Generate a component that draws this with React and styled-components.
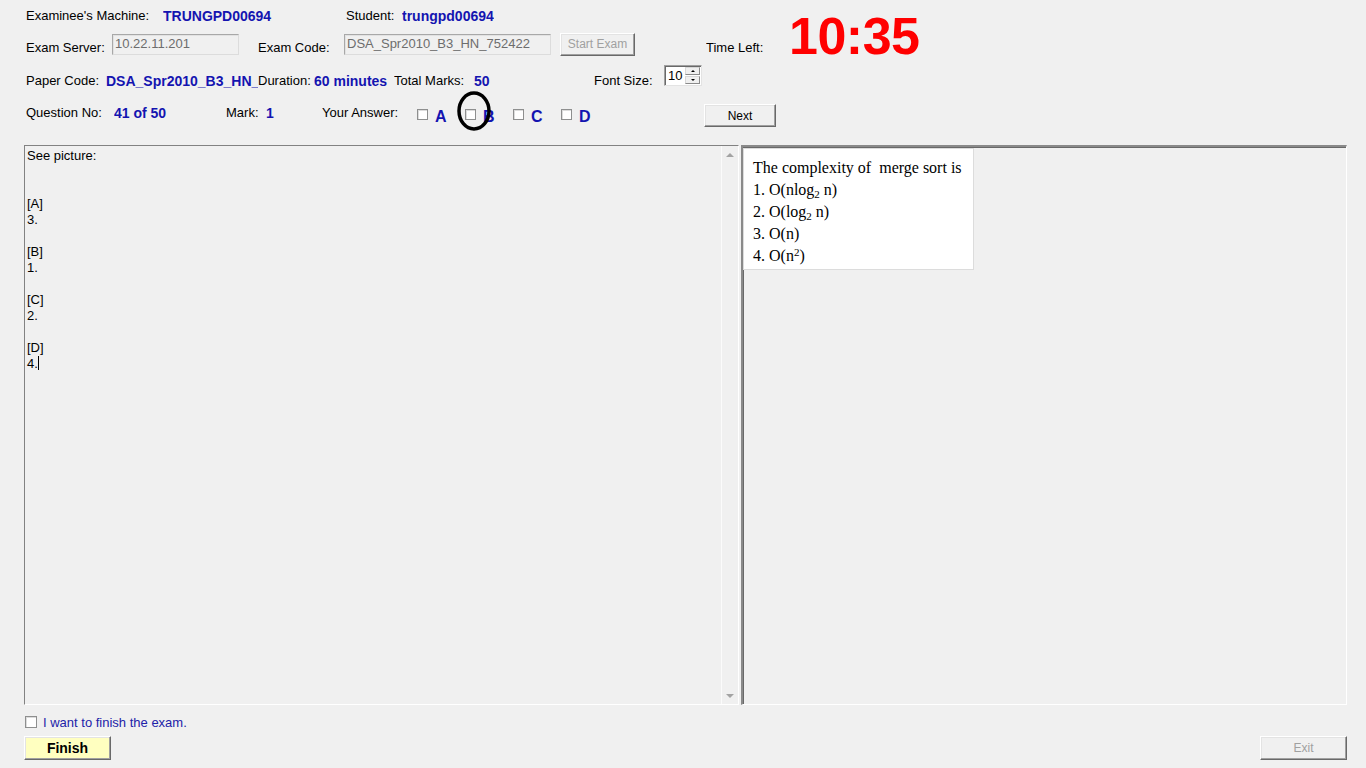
import React from "react";
import styled, { createGlobalStyle } from "styled-components";

const Global = createGlobalStyle`
  html, body { margin: 0; padding: 0; background: #f0f0f0; }
  body { font-family: "Liberation Sans", Arial, sans-serif; font-size: 13px; color: #000; }
  * { box-sizing: border-box; }
`;

const Page = styled.div`
  position: relative;
  width: 1366px;
  height: 768px;
  overflow: hidden;
  padding-left: 24px;
`;

const TopBlock = styled.div`
  display: flex;
  align-items: flex-start;
  padding-left: 2px;
  height: 62px;
`;

const Stack = styled.div`
  width: 763px;
  display: flex;
  flex-direction: column;
`;

const Row = styled.div`
  display: flex;
  align-items: ${(p) => p.$align || "center"};
  height: ${(p) => p.$h}px;
  margin-top: ${(p) => p.$mt}px;
  padding-left: ${(p) => p.$pl || 0}px;
`;

const Label = styled.div`
  width: ${(p) => (p.$w ? `${p.$w}px` : "auto")};
  flex: none;
  line-height: 16px;
  white-space: nowrap;
  overflow: hidden;
  align-self: ${(p) => p.$self || "auto"};
  margin-top: ${(p) => p.$mt || 0}px;
`;

const Value = styled.div`
  width: ${(p) => (p.$w ? `${p.$w}px` : "auto")};
  flex: none;
  font-size: 14px;
  font-weight: bold;
  color: #1414b0;
  line-height: 16px;
  white-space: nowrap;
  overflow: hidden;
  align-self: ${(p) => p.$self || "auto"};
  margin-top: ${(p) => p.$mt || 0}px;
`;

const Spacer = styled.div`
  width: ${(p) => p.$w}px;
  flex: none;
`;

const DisabledInput = styled.div`
  width: ${(p) => p.$w}px;
  height: 21px;
  flex: none;
  background: #f0f0f0;
  border: 1px solid #a8a8a8;
  border-right-color: #dcdcdc;
  border-bottom-color: #dcdcdc;
  box-shadow: inset 1px 1px 0 #e2e2e2;
  color: #6d6d6d;
  font-size: 13px;
  line-height: 18px;
  padding-left: 2px;
  white-space: nowrap;
  overflow: hidden;
`;

const WinButton = styled.div`
  width: ${(p) => p.$w}px;
  height: ${(p) => p.$h || 23}px;
  flex: none;
  display: flex;
  align-items: center;
  justify-content: center;
  background: ${(p) => p.$bg || "#f0f0f0"};
  border-top: 1px solid #ffffff;
  border-left: 1px solid #ffffff;
  border-right: 1px solid #696969;
  border-bottom: 1px solid #696969;
  box-shadow: inset -1px -1px 0 #a0a0a0, inset 1px 1px 0 #e3e3e3;
  font-size: ${(p) => p.$fs || 12}px;
  font-weight: ${(p) => (p.$bold ? "bold" : "normal")};
  color: ${(p) => (p.$disabled ? "#a0a0a0" : "#000")};
`;

const Timer = styled.div`
  margin-top: 10px;
  font-size: 52px;
  line-height: 52px;
  font-weight: bold;
  color: #ff0000;
  letter-spacing: -0.5px;
`;

const Spin = styled.div`
  width: 38px;
  height: 21px;
  flex: none;
  display: flex;
  background: #fff;
  border: 1px solid #a0a0a0;
  border-right-color: #e3e3e3;
  border-bottom-color: #e3e3e3;
  box-shadow: inset 1px 1px 0 #696969;
  align-self: flex-start;
`;

const SpinText = styled.div`
  flex: 1;
  padding-left: 3px;
  line-height: 19px;
  font-size: 13px;
`;

const SpinButtons = styled.div`
  width: 16px;
  display: flex;
  flex-direction: column;
  padding: 1px 1px 1px 0;
  gap: 1px;
`;

const SpinBtn = styled.div`
  flex: 1;
  background: #f0f0f0;
  border: 1px solid #d8d8d8;
  border-right-color: #8a8a8a;
  border-bottom-color: #8a8a8a;
  display: flex;
  align-items: center;
  justify-content: center;
`;

const Arrow = styled.div`
  width: 0;
  height: 0;
  border-left: 2px solid transparent;
  border-right: 2px solid transparent;
  ${(p) => (p.$down ? "border-top: 2px solid #000;" : "border-bottom: 2px solid #000;")}
`;

const Box = styled.span`
  display: inline-block;
  width: ${(p) => p.$s || 11}px;
  height: ${(p) => p.$s || 11}px;
  flex: none;
  background: #fff;
  border: 1px solid #8e8f8f;
  box-shadow: inset 1px 1px 0 #dcdcdc;
`;

const Choice = styled.div`
  width: 48px;
  flex: none;
  display: flex;
  align-items: flex-start;
`;

const ChoiceBox = styled(Box)`
  margin-top: 5px;
`;

const Letter = styled.span`
  margin-left: 7px;
  margin-top: 4px;
  font-size: 16px;
  line-height: 18px;
  font-weight: bold;
  color: #1414b0;
`;

const Panels = styled.div`
  display: flex;
  gap: 2px;
  margin-top: 18px;
  height: 560px;
  width: 1323px;
`;

const LeftPanel = styled.div`
  width: 715px;
  flex: none;
  display: flex;
  border-top: 1px solid #828282;
  border-left: 1px solid #828282;
  border-bottom: 1px solid #ffffff;
  border-right: 1px solid #ffffff;
`;

const TextArea = styled.div`
  flex: 1;
  padding: 2px 2px;
  line-height: 16px;
  font-size: 13px;
  white-space: pre;
`;

const Caret = styled.span`
  display: inline-block;
  width: 1px;
  height: 14px;
  background: #000;
  vertical-align: -2px;
`;

const Scrollbar = styled.div`
  width: 17px;
  flex: none;
  display: flex;
  flex-direction: column;
  justify-content: space-between;
  align-items: center;
  background: #f0f0f0;
  border-left: 1px solid #fbfbfb;
  padding: 7px 0 6px;
`;

const ScrollArrow = styled.div`
  width: 0;
  height: 0;
  border-left: 4px solid transparent;
  border-right: 4px solid transparent;
  ${(p) => (p.$down ? "border-top: 4px solid #a3a3a3;" : "border-bottom: 4px solid #a3a3a3;")}
`;

const RightPanel = styled.div`
  flex: 1;
  border-top: 2px solid #8a8a8a;
  border-left: 2px solid #8a8a8a;
  border-bottom: 1px solid #ffffff;
  border-right: 1px solid #ffffff;
  box-shadow: inset 1px 1px 0 #696969;
  padding-top: 1px;
`;

const Picture = styled.div`
  width: 231px;
  height: 122px;
  background: #fff;
  border: 1px solid #dcdcdc;
  padding: 8px 0 0 9px;
  font-family: "Liberation Serif", "Times New Roman", serif;
  font-size: 16px;
  line-height: 22px;
  white-space: pre;
`;

const Sub = styled.sub`
  font-size: 11px;
  vertical-align: -3px;
  line-height: 0;
`;

const Sup = styled.sup`
  font-size: 11px;
  vertical-align: 5px;
  line-height: 0;
`;

const FinishRow = styled.div`
  display: flex;
  align-items: center;
  gap: 6px;
  margin-top: 11px;
  height: 12px;
  padding-left: 1px;
`;

const FinishLabel = styled.span`
  color: #2222a8;
  font-size: 13px;
  line-height: 16px;
  margin-top: 1px;
`;

const BottomRow = styled.div`
  display: flex;
  justify-content: space-between;
  margin-top: 8px;
  width: 1323px;
`;

const Annotation = styled.svg`
  position: absolute;
  left: 456px;
  top: 90px;
  pointer-events: none;
`;

export default function App() {
  return (
    <>
      <Global />
      <Page>
        <TopBlock>
          <Stack>
            <Row $h={18} $mt={7}>
              <Label $w={137}>Examinee's Machine:</Label>
              <Value $w={183}>TRUNGPD00694</Value>
              <Label $w={56}>Student:</Label>
              <Value>trungpd00694</Value>
            </Row>
            <Row $h={24} $mt={7}>
              <Label $w={86} $self="flex-end">Exam Server:</Label>
              <DisabledInput $w={127}>10.22.11.201</DisabledInput>
              <Spacer $w={19} />
              <Label $w={86} $self="flex-end">Exam Code:</Label>
              <DisabledInput $w={207}>DSA_Spr2010_B3_HN_752422</DisabledInput>
              <Spacer $w={9} />
              <WinButton $w={75} $disabled>Start Exam</WinButton>
              <Spacer $w={71} />
              <Label $self="flex-end">Time Left:</Label>
            </Row>
          </Stack>
          <Timer>10:35</Timer>
        </TopBlock>
        <Row $h={24} $mt={3} $pl={2} $align="flex-end">
          <Label $w={80}>Paper Code:</Label>
          <Value $w={152}>DSA_Spr2010_B3_HN_</Value>
          <Label $w={56}>Duration:</Label>
          <Value $w={80}>60 minutes</Value>
          <Label $w={80}>Total Marks:</Label>
          <Value $w={120}>50</Value>
          <Label $w={70}>Font Size:</Label>
          <Spin>
            <SpinText>10</SpinText>
            <SpinButtons>
              <SpinBtn><Arrow /></SpinBtn>
              <SpinBtn><Arrow $down /></SpinBtn>
            </SpinButtons>
          </Spin>
        </Row>
        <Row $h={23} $mt={15} $pl={2} $align="flex-start">
          <Label $w={88} $mt={1}>Question No:</Label>
          <Value $w={112} $mt={1}>41 of 50</Value>
          <Label $w={40} $mt={1}>Mark:</Label>
          <Value $w={56} $mt={1}>1</Value>
          <Label $w={95} $mt={1}>Your Answer:</Label>
          {["A", "B", "C", "D"].map((l) => (
            <Choice key={l}>
              <ChoiceBox />
              <Letter>{l}</Letter>
            </Choice>
          ))}
          <Spacer $w={95} />
          <WinButton $w={72}>Next</WinButton>
        </Row>
        <Panels>
          <LeftPanel>
            <TextArea>
              {"See picture:\n\n\n[A]\n3.\n\n[B]\n1.\n\n[C]\n2.\n\n[D]\n4."}
              <Caret />
            </TextArea>
            <Scrollbar>
              <ScrollArrow />
              <ScrollArrow $down />
            </Scrollbar>
          </LeftPanel>
          <RightPanel>
            <Picture>
              {"The complexity of  merge sort is\n1. O(nlog"}
              <Sub>2</Sub>
              {" n)\n2. O(log"}
              <Sub>2</Sub>
              {" n)\n3. O(n)\n4. O(n"}
              <Sup>2</Sup>
              {")"}
            </Picture>
          </RightPanel>
        </Panels>
        <FinishRow>
          <Box $s={12} />
          <FinishLabel>I want to finish the exam.</FinishLabel>
        </FinishRow>
        <BottomRow>
          <WinButton $w={87} $h={24} $bg="#ffffc0" $bold $fs={14}>Finish</WinButton>
          <WinButton $w={87} $h={24} $disabled>Exit</WinButton>
        </BottomRow>
        <Annotation width="38" height="44" viewBox="0 0 38 44">
          <ellipse cx="18" cy="21" rx="15" ry="18" fill="none" stroke="#000" strokeWidth="3.5" />
        </Annotation>
      </Page>
    </>
  );
}
